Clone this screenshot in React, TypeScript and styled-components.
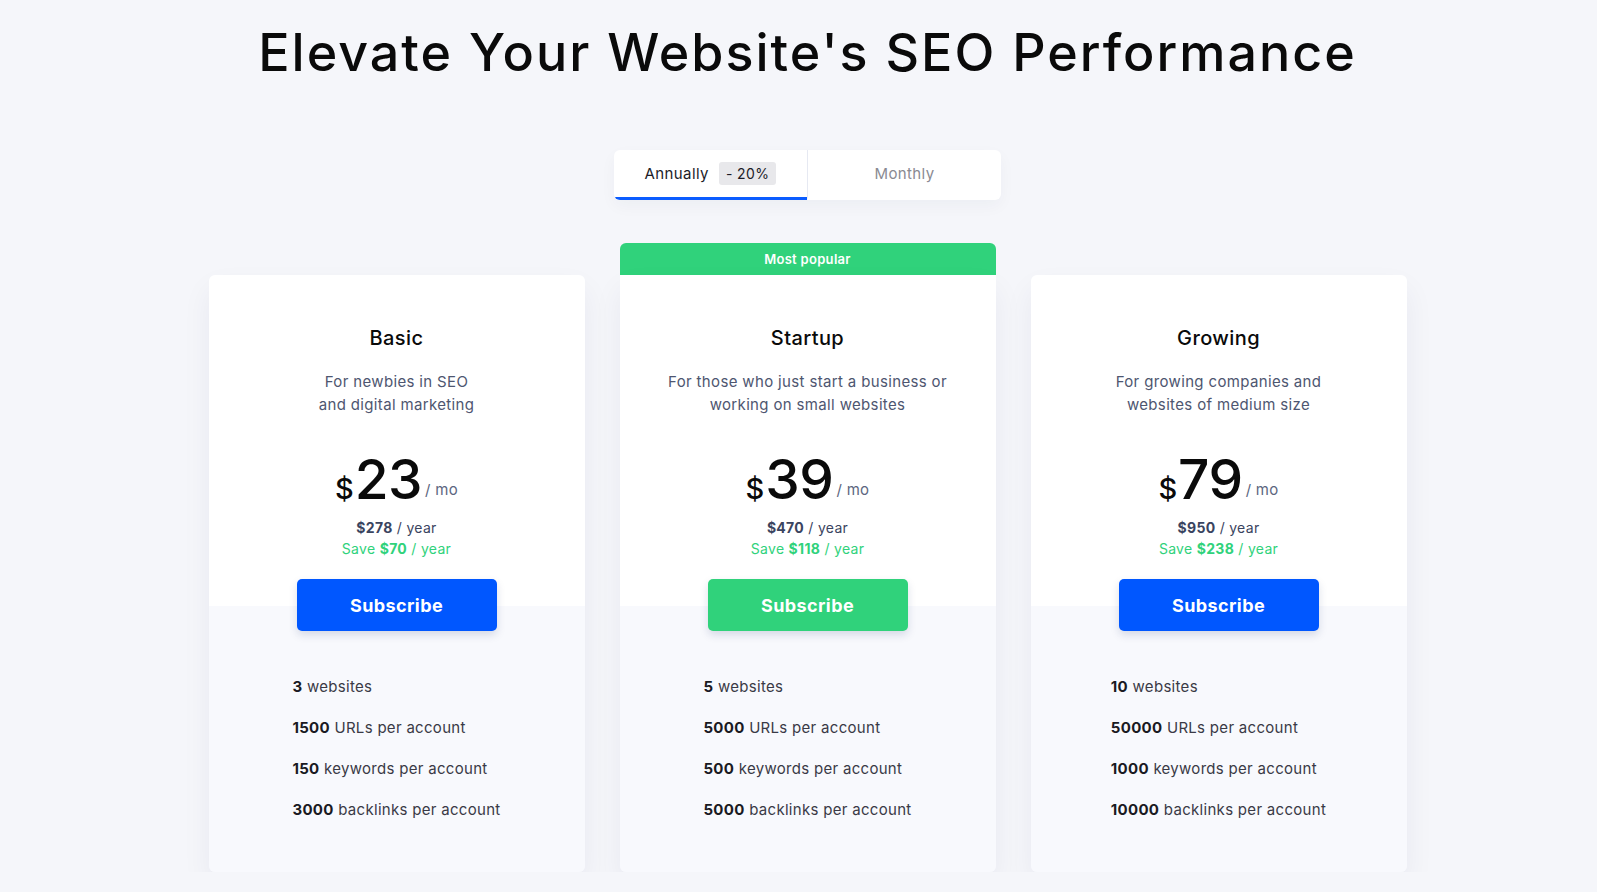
import React from 'react';
import styled, { createGlobalStyle } from 'styled-components';

const GlobalStyle = createGlobalStyle`
  body {
    margin: 0;
    background: #f5f6fa;
    font-family: Inter, 'Open Sans', sans-serif;
    color: #111;
  }
`;

const Page = styled.div`
  padding: 22px 0 0 18px;
  display: flex;
  flex-direction: column;
  align-items: center;
`;

const Title = styled.h1`
  margin: 0;
  font-size: 52px;
  line-height: 62px;
  font-weight: 500;
  color: #0a0a0a;
  letter-spacing: 2px;
`;

const Toggle = styled.div`
  margin-top: 66px;
  display: flex;
  width: 387px;
  height: 50px;
  background: #fff;
  border-radius: 6px;
  box-shadow: 0 6px 16px rgba(30, 40, 80, 0.04);
  overflow: hidden;
`;

const Tab = styled.div<{ $active?: boolean }>`
  flex: 1;
  display: flex;
  align-items: center;
  justify-content: center;
  gap: 10px;
  font-size: 15px;
  letter-spacing: 0.4px;
  color: ${(p) => (p.$active ? '#1c1c28' : '#8a8a92')};
  border-bottom: 3px solid ${(p) => (p.$active ? '#0a5cff' : 'transparent')};
  box-sizing: border-box;

  & + & {
    border-left: 1px solid #e6e9f2;
  }
`;

const Badge = styled.span`
  background: #e8e8eb;
  border-radius: 3px;
  padding: 3px 7px;
  font-size: 14px;
  color: #1c1c28;
`;

const Plans = styled.div`
  margin-top: 43px;
  display: flex;
  align-items: flex-end;
  gap: 35px;
`;

const Column = styled.div`
  width: 376px;
  display: flex;
  flex-direction: column;
`;

const Banner = styled.div`
  height: 32px;
  background: #30d27b;
  border-radius: 6px 6px 0 0;
  color: #fff;
  font-size: 13px;
  font-weight: 600;
  letter-spacing: 0.3px;
  display: flex;
  align-items: center;
  justify-content: center;
`;

const Card = styled.div<{ $flat?: boolean }>`
  height: 597px;
  display: flex;
  flex-direction: column;
  border-radius: ${(p) => (p.$flat ? '0 0 6px 6px' : '6px')};
  overflow: hidden;
  box-shadow: 0 14px 30px rgba(30, 40, 80, 0.06);
`;

const Top = styled.div`
  background: #fff;
  height: 331px;
  flex-shrink: 0;
  box-sizing: border-box;
  padding-top: 51px;
  display: flex;
  flex-direction: column;
  align-items: center;
  text-align: center;
`;

const PlanName = styled.h3`
  margin: 0;
  font-size: 20px;
  line-height: 24px;
  font-weight: 500;
  letter-spacing: 0.4px;
  color: #0a0a0a;
`;

const Description = styled.p`
  margin: 20px 0 0;
  font-size: 15px;
  line-height: 23px;
  letter-spacing: 0.35px;
  color: #4e5670;
  white-space: pre-line;
`;

const PriceRow = styled.div`
  margin-top: 36px;
  display: flex;
  align-items: baseline;
  line-height: 1;
`;

const Currency = styled.span`
  font-size: 29px;
  font-weight: 500;
  color: #0a0a0a;
  margin-right: 1px;
`;

const Amount = styled.span`
  font-size: 55px;
  font-weight: 500;
  color: #0a0a0a;
  letter-spacing: -0.5px;
`;

const Per = styled.span`
  font-size: 15px;
  color: #5c6680;
  margin-left: 3px;
  position: relative;
  top: -4px;
  letter-spacing: 0.3px;
`;

const YearLine = styled.div<{ $save?: boolean }>`
  font-size: 14px;
  line-height: 21px;
  letter-spacing: 0.3px;
  color: ${(p) => (p.$save ? '#30d27b' : '#3a4460')};
  margin-top: ${(p) => (p.$save ? '0' : '10px')};

  b {
    font-weight: 700;
  }
`;

const SubscribeButton = styled.button<{ $green?: boolean }>`
  margin-top: 20px;
  flex-shrink: 0;
  width: 200px;
  height: 52px;
  border: none;
  border-radius: 5px;
  background: ${(p) => (p.$green ? '#30d27b' : '#0057ff')};
  color: #fff;
  font-family: inherit;
  font-size: 18px;
  font-weight: 700;
  letter-spacing: 0.4px;
  cursor: pointer;
  position: relative;
  z-index: 1;
  box-shadow: 0 4px 8px rgba(20, 40, 100, 0.15);
`;

const Bottom = styled.div`
  flex: 1;
  background: #f8f9fd;
  padding-top: 71px;
  display: flex;
  justify-content: center;
`;

const Features = styled.ul`
  list-style: none;
  margin: 0;
  padding: 0;
  display: flex;
  flex-direction: column;
  gap: 21px;
`;

const Feature = styled.li`
  font-size: 15px;
  line-height: 20px;
  letter-spacing: 0.3px;
  color: #3a3a46;

  b {
    color: #1a1a22;
    font-weight: 700;
  }
`;

type Plan = {
  name: string;
  description: string;
  price: number;
  year: number;
  save: number;
  features: [string, string][];
  popular?: boolean;
};

const plans: Plan[] = [
  {
    name: 'Basic',
    description: 'For newbies in SEO\nand digital marketing',
    price: 23,
    year: 278,
    save: 70,
    features: [
      ['3', 'websites'],
      ['1500', 'URLs per account'],
      ['150', 'keywords per account'],
      ['3000', 'backlinks per account'],
    ],
  },
  {
    name: 'Startup',
    description: 'For those who just start a business or\nworking on small websites',
    price: 39,
    year: 470,
    save: 118,
    popular: true,
    features: [
      ['5', 'websites'],
      ['5000', 'URLs per account'],
      ['500', 'keywords per account'],
      ['5000', 'backlinks per account'],
    ],
  },
  {
    name: 'Growing',
    description: 'For growing companies and\nwebsites of medium size',
    price: 79,
    year: 950,
    save: 238,
    features: [
      ['10', 'websites'],
      ['50000', 'URLs per account'],
      ['1000', 'keywords per account'],
      ['10000', 'backlinks per account'],
    ],
  },
];

const App: React.FC = () => {
  return (
    <>
      <GlobalStyle />
      <Page>
        <Title>Elevate Your Website's SEO Performance</Title>

        <Toggle>
          <Tab $active>
            Annually <Badge>- 20%</Badge>
          </Tab>
          <Tab>Monthly</Tab>
        </Toggle>

        <Plans>
          {plans.map((plan) => (
            <Column key={plan.name}>
              {plan.popular && <Banner>Most popular</Banner>}
              <Card $flat={plan.popular}>
                <Top>
                  <PlanName>{plan.name}</PlanName>
                  <Description>{plan.description}</Description>
                  <PriceRow>
                    <Currency>$</Currency>
                    <Amount>{plan.price}</Amount>
                    <Per>/ mo</Per>
                  </PriceRow>
                  <YearLine>
                    <b>${plan.year}</b> / year
                  </YearLine>
                  <YearLine $save>
                    Save <b>${plan.save}</b> / year
                  </YearLine>
                  <SubscribeButton $green={plan.popular}>Subscribe</SubscribeButton>
                </Top>
                <Bottom>
                  <Features>
                    {plan.features.map(([num, text]) => (
                      <Feature key={text}>
                        <b>{num}</b> {text}
                      </Feature>
                    ))}
                  </Features>
                </Bottom>
              </Card>
            </Column>
          ))}
        </Plans>
      </Page>
    </>
  );
};

export default App;
